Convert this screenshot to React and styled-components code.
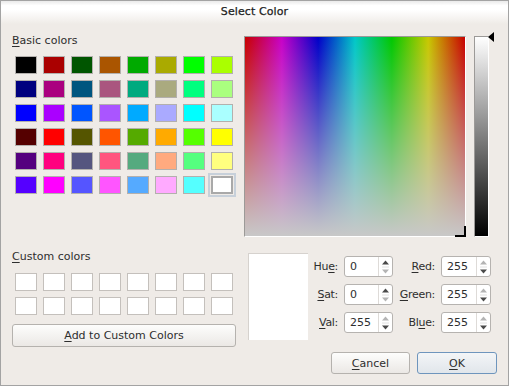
import styled, { createGlobalStyle } from "styled-components"

const GlobalStyle = createGlobalStyle`
	html, body {
		margin: 0;
		padding: 0;
		background: #efebe7;
	}
	body {
		font-family: "DejaVu Sans", "Liberation Sans", sans-serif;
		font-size: 11px;
		color: #2e2e2e;
	}
`;

const BASIC = [
	["#000000", "#aa0000", "#005500", "#aa5500", "#00aa00", "#aaaa00", "#00ff00", "#aaff00"],
	["#00007f", "#aa007f", "#00557f", "#aa557f", "#00aa7f", "#aaaa7f", "#00ff7f", "#aaff7f"],
	["#0000ff", "#aa00ff", "#0055ff", "#aa55ff", "#00aaff", "#aaaaff", "#00ffff", "#aaffff"],
	["#550000", "#ff0000", "#555500", "#ff5500", "#55aa00", "#ffaa00", "#55ff00", "#ffff00"],
	["#55007f", "#ff007f", "#55557f", "#ff557f", "#55aa7f", "#ffaa7f", "#55ff7f", "#ffff7f"],
	["#5500ff", "#ff00ff", "#5555ff", "#ff55ff", "#55aaff", "#ffaaff", "#55ffff", "#ffffff"],
];

// label split around its mnemonic letter
const FIELDS = [
	[{ pre: "Hu", mn: "e", post: ":", value: "0", up: true, down: false },
	 { pre: "", mn: "R", post: "ed:", value: "255", up: false, down: true }],
	[{ pre: "", mn: "S", post: "at:", value: "0", up: true, down: false },
	 { pre: "", mn: "G", post: "reen:", value: "255", up: false, down: true }],
	[{ pre: "", mn: "V", post: "al:", value: "255", up: false, down: true },
	 { pre: "Bl", mn: "u", post: "e:", value: "255", up: false, down: true }],
];

const Arrows = ({up, down}) => (
	<ArrowBox>
		<svg width="9" height="20" viewBox="0 0 9 20">
			<path d="M1 7.5 L4.5 3.5 L8 7.5 Z" fill={up ? "#4a4a4a" : "#b4b4b4"}/>
			<line x1="1" y1="10" x2="8" y2="10" stroke="#e2e2e2" strokeWidth="1"/>
			<path d="M1 12.5 L4.5 16.5 L8 12.5 Z" fill={down ? "#4a4a4a" : "#b4b4b4"}/>
		</svg>
	</ArrowBox>
)

const Field = ({pre, mn, post, value, up, down}) => (
	<>
		<FieldLabel><span>{pre}<u>{mn}</u>{post}</span></FieldLabel>
		<SpinBox>
			<SpinValue>{value}</SpinValue>
			<Arrows up={up} down={down}/>
		</SpinBox>
	</>
)

export default function App() {
	return (
		<>
			<GlobalStyle/>
			<Window>
				<TitleBar>Select Color</TitleBar>
				<Content>
					<TopSection>
						<LeftColumn>
							<SectionLabel $top={10}><u>B</u>asic colors</SectionLabel>
							<SwatchGrid $top={9}>
								{BASIC.flat().map((c, i) => (
									<Swatch key={i} $color={c} $selected={i === 47}/>
								))}
							</SwatchGrid>
						</LeftColumn>
						<PickerArea>
							<Spectrum>
								<CrossH/>
								<CrossV/>
							</Spectrum>
							<SliderWrap>
								<LumSlider/>
								<Pointer/>
							</SliderWrap>
						</PickerArea>
					</TopSection>
					<BottomSection>
						<LeftColumn>
							<SectionLabel $top={3}><u>C</u>ustom colors</SectionLabel>
							<SwatchGrid $top={10}>
								{Array.from({length: 16}).map((_, i) => (
									<CustomCell key={i}/>
								))}
							</SwatchGrid>
							<WideButton><u>A</u>dd to Custom Colors</WideButton>
						</LeftColumn>
						<RightColumn>
							<EditRow>
								<Preview/>
								<FieldGrid>
									{FIELDS.map((row, r) => row.map((f, c) => (
										<Field key={`${r}-${c}`} {...f}/>
									)))}
								</FieldGrid>
							</EditRow>
							<ButtonRow>
								<DialogButton><u>C</u>ancel</DialogButton>
								<DialogButton $default><u>O</u>K</DialogButton>
							</ButtonRow>
						</RightColumn>
					</BottomSection>
				</Content>
			</Window>
		</>
	)
}

const Window = styled.div`
	box-sizing: border-box;
	width: 509px;
	height: 386px;
	border: 1px solid #a3a3a3;
	background: #efebe7;
	display: flex;
	flex-direction: column;
	overflow: hidden;

	u {
		text-decoration: underline;
		text-underline-offset: 2px;
		text-decoration-thickness: 1px;
	}
`;

const TitleBar = styled.div`
	height: 23px;
	flex: none;
	display: flex;
	align-items: center;
	justify-content: center;
	padding-bottom: 2px;
	box-sizing: border-box;
	background: linear-gradient(#eaeaea 0, #ffffff 20%, #ffffff 40%, #efebe7 100%);
	color: #222;
	font-size: 11px;
	-webkit-text-stroke: 0.25px #222;
	letter-spacing: 0.1px;
`;

const Content = styled.div`
	padding: 0 11px;
	display: flex;
	flex-direction: column;
`;

const TopSection = styled.div`
	display: flex;
	height: 223px;
`;

const BottomSection = styled.div`
	display: flex;
`;

const LeftColumn = styled.div`
	width: 224px;
	flex: none;
	display: flex;
	flex-direction: column;
`;

const SectionLabel = styled.div`
	margin-top: ${p => p.$top}px;
	height: 13px;
	line-height: 13px;
`;

const SwatchGrid = styled.div`
	margin-top: ${p => p.$top}px;
	padding-left: 3px;
	display: grid;
	grid-template-columns: repeat(8, 22px);
	grid-auto-rows: 18px;
	column-gap: 6px;
	row-gap: 6px;
`;

const Swatch = styled.div`
	box-sizing: border-box;
	border: 1px solid #b3b0ad;
	background: ${p => p.$color};
	${p => p.$selected && `
		border: 2px solid #a9a9a9;
		outline: 2px solid #c7d0da;
		outline-offset: 1px;
	`}
`;

const CustomCell = styled.div`
	box-sizing: border-box;
	border: 1px solid #c4c0bc;
	background: #ffffff;
`;

const PickerArea = styled.div`
	display: flex;
	margin-left: 8px;
	margin-top: 12px;
	align-items: flex-start;
`;

const Spectrum = styled.div`
	position: relative;
	box-sizing: border-box;
	width: 222px;
	height: 201px;
	border-top: 1px solid #9c9a98;
	border-left: 1px solid #9c9a98;
	border-right: 1px solid #ffffff;
	border-bottom: 1px solid #ffffff;
	background:
		linear-gradient(to bottom, rgba(200, 200, 200, 0), #c8c8c8),
		linear-gradient(to right, #c80000, #c800c8 16.7%, #0000c8 33.3%, #00c8c8 50%, #00c800 66.7%, #c8c800 83.3%, #c80000);
`;

const CrossH = styled.div`
	position: absolute;
	right: -1px;
	bottom: -1px;
	width: 11px;
	height: 2px;
	background: #000;
`;

const CrossV = styled.div`
	position: absolute;
	right: -1px;
	bottom: -1px;
	width: 2px;
	height: 11px;
	background: #000;
`;

const SliderWrap = styled.div`
	position: relative;
	margin-left: 8px;
	width: 21px;
	height: 201px;
`;

const LumSlider = styled.div`
	box-sizing: border-box;
	width: 15px;
	height: 201px;
	border-top: 1px solid #9c9a98;
	border-left: 1px solid #9c9a98;
	border-right: 1px solid #ffffff;
	border-bottom: 1px solid #ffffff;
	background: linear-gradient(to bottom, #ffffff, #000000);
`;

const Pointer = styled.div`
	position: absolute;
	left: 14px;
	top: -4px;
	width: 0;
	height: 0;
	border-top: 5px solid transparent;
	border-bottom: 5px solid transparent;
	border-right: 6px solid #000;
`;

const WideButton = styled.button`
	margin-top: 9px;
	width: 224px;
	height: 23px;
	box-sizing: border-box;
	border: 1px solid #b5b2ae;
	border-radius: 3px;
	background: linear-gradient(#fdfdfc, #ebe8e5);
	font-family: inherit;
	font-size: 11px;
	color: #2e2e2e;
	padding: 0;
`;

const RightColumn = styled.div`
	margin-left: 12px;
	display: flex;
	flex-direction: column;
	width: 249px;
`;

const EditRow = styled.div`
	display: flex;
	margin-top: 6px;
`;

const Preview = styled.div`
	box-sizing: border-box;
	width: 60px;
	height: 87px;
	background: #ffffff;
	border-top: 1px solid #d6d2ce;
	border-left: 1px solid #d6d2ce;
`;

const FieldGrid = styled.div`
	margin-left: 6px;
	margin-top: 3px;
	display: grid;
	grid-template-columns: 24px 49px 36px 50px;
	grid-auto-rows: 21px;
	column-gap: 6px;
	row-gap: 7px;
	align-items: center;
`;

const FieldLabel = styled.div`
	display: flex;
	justify-content: flex-end;
	white-space: nowrap;
	font-size: 11px;
	letter-spacing: -0.3px;
`;

const SpinBox = styled.div`
	box-sizing: border-box;
	height: 21px;
	display: flex;
	align-items: stretch;
	background: #ffffff;
	border: 1px solid #b6b3b0;
	border-radius: 3px;
`;

const SpinValue = styled.div`
	flex: 1;
	display: flex;
	align-items: center;
	padding-left: 5px;
	font-size: 11px;
`;

const ArrowBox = styled.div`
	width: 13px;
	display: flex;
	align-items: center;
	justify-content: center;
	border-left: 1px solid #dedbd8;
`;

const ButtonRow = styled.div`
	display: flex;
	justify-content: flex-end;
	gap: 7px;
	margin-top: 12px;
`;

const DialogButton = styled.button`
	box-sizing: border-box;
	width: ${p => p.$default ? 80 : 79}px;
	height: 22px;
	padding: 0;
	border-radius: 3px;
	font-family: inherit;
	font-size: 11px;
	color: #2e2e2e;
	border: 1px solid ${p => p.$default ? "#6e95bd" : "#b5b2ae"};
	background: ${p => p.$default
		? "linear-gradient(#f3f5f7, #e1e6eb)"
		: "linear-gradient(#fdfdfc, #ebe8e5)"};
`;
